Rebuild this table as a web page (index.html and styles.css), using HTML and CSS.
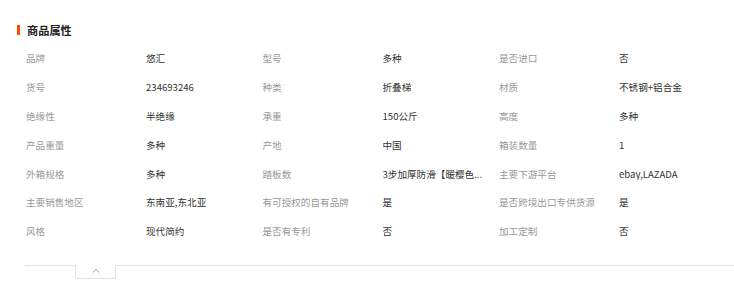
FILE: index.html
```html
<!DOCTYPE html>
<html lang="zh">
<head>
<meta charset="utf-8">
<link rel="stylesheet" href="styles.css">
</head>
<body>
<div class="panel">
  <h3 class="title">商品属性</h3>
  <div class="attrs">
    <div class="item"><span class="label">品牌</span><span class="value">悠汇</span></div>
    <div class="item"><span class="label">型号</span><span class="value">多种</span></div>
    <div class="item"><span class="label">是否进口</span><span class="value">否</span></div>
    <div class="item"><span class="label">货号</span><span class="value">234693246</span></div>
    <div class="item"><span class="label">种类</span><span class="value">折叠梯</span></div>
    <div class="item"><span class="label">材质</span><span class="value">不锈钢+铝合金</span></div>
    <div class="item"><span class="label">绝缘性</span><span class="value">半绝缘</span></div>
    <div class="item"><span class="label">承重</span><span class="value">150公斤</span></div>
    <div class="item"><span class="label">高度</span><span class="value">多种</span></div>
    <div class="item"><span class="label">产品重量</span><span class="value">多种</span></div>
    <div class="item"><span class="label">产地</span><span class="value">中国</span></div>
    <div class="item"><span class="label">箱装数量</span><span class="value">1</span></div>
    <div class="item"><span class="label">外箱规格</span><span class="value">多种</span></div>
    <div class="item"><span class="label">踏板数</span><span class="value">3步加厚防滑【暖樱色...</span></div>
    <div class="item"><span class="label">主要下游平台</span><span class="value">ebay,LAZADA</span></div>
    <div class="item"><span class="label">主要销售地区</span><span class="value">东南亚,东北亚</span></div>
    <div class="item"><span class="label">有可授权的自有品牌</span><span class="value">是</span></div>
    <div class="item"><span class="label">是否跨境出口专供货源</span><span class="value">是</span></div>
    <div class="item"><span class="label">风格</span><span class="value">现代简约</span></div>
    <div class="item"><span class="label">是否有专利</span><span class="value">否</span></div>
    <div class="item"><span class="label">加工定制</span><span class="value">否</span></div>
  </div>
  <div class="fold">
    <div class="fold-tab">
      <svg width="8" height="5" viewBox="0 0 8 5"><path d="M1 4.5 L4 1.5 L7 4.5" fill="none" stroke="#8a9bb8" stroke-width="1"/></svg>
    </div>
  </div>
</div>
</body>
</html>
```
FILE: styles.css
```css
html, body {
  margin: 0;
  padding: 0;
  background: #fff;
}
body {
  font-family: "Noto Sans CJK SC", "Microsoft YaHei", sans-serif;
  color: #333;
}
.panel {
  padding: 25px 0 0 17px;
}
.title {
  margin: 0;
  border-left: 3px solid #ff4d00;
  padding-left: 7px;
  font-size: 11.2px;
  line-height: 10px;
  height: 10px;
  font-weight: bold;
  color: #222;
}
.attrs {
  margin: 9px 0 0 9px;
  display: grid;
  grid-template-columns: 236.5px 236.5px 236.5px;
}
.item {
  display: flex;
  height: 28.8px;
  align-items: center;
  font-size: 9.6px;
  line-height: 12px;
}
.label {
  width: 120px;
  flex: none;
  color: #999;
  white-space: nowrap;
}
.value {
  color: #333;
  max-width: 116px;
  white-space: nowrap;
  overflow: hidden;
}
.fold {
  margin: 19px 0 0 8px;
  border-top: 1px solid #e3e3e3;
  padding-left: 50px;
}
.fold-tab {
  width: 41px;
  height: 14px;
  margin-top: -1px;
  border: 1px solid #e3e3e3;
  border-top: 1px solid #fff;
  border-radius: 0 0 3px 3px;
  display: flex;
  justify-content: center;
  align-items: flex-start;
  padding-top: 2px;
  box-sizing: border-box;
}
.fold-tab svg {
  display: block;
}
```
